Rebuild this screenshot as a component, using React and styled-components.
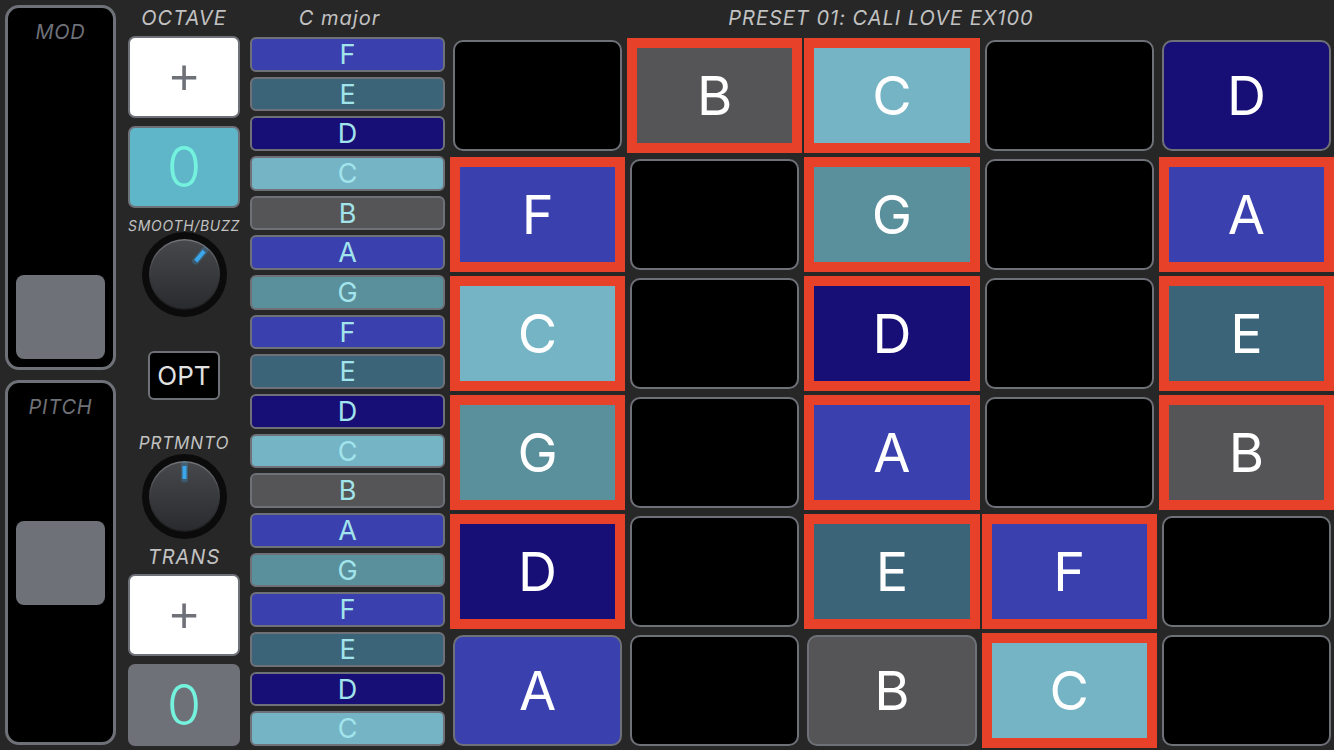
import React from 'react';
import styled, { createGlobalStyle } from 'styled-components';

const COLORS = {
  F: '#3a40ae',
  E: '#3c6479',
  D: '#170e76',
  C: '#74b4c4',
  B: '#555557',
  A: '#3a40ae',
  G: '#5a8f9c',
};

const SCALE = ['F', 'E', 'D', 'C', 'B', 'A', 'G', 'F', 'E', 'D', 'C', 'B', 'A', 'G', 'F', 'E', 'D', 'C'];

// null = empty pad, [note, highlighted]
const PADS = [
  [null, ['B', true], ['C', true], null, ['D', false]],
  [['F', true], null, ['G', true], null, ['A', true]],
  [['C', true], null, ['D', true], null, ['E', true]],
  [['G', true], null, ['A', true], null, ['B', true]],
  [['D', true], null, ['E', true], ['F', true], null],
  [['A', false], null, ['B', false], ['C', true], null],
];

const GlobalStyle = createGlobalStyle`
  html, body {
    margin: 0;
    padding: 0;
    background: #272727;
    overflow: hidden;
  }
  body {
    font-family: Inter, "Liberation Sans", sans-serif;
  }
`;

const Screen = styled.div`
  width: 1334px;
  height: 750px;
  display: flex;
  background: #272727;
`;

const StripColumn = styled.div`
  width: 111px;
  margin-left: 5px;
  padding: 5px 0;
  display: flex;
  flex-direction: column;
  gap: 10px;
`;

const Strip = styled.div`
  position: relative;
  flex: 1;
  background: #000;
  border: 3px solid #6f7178;
  border-radius: 14px;
`;

const StripLabel = styled.div`
  margin-top: 12px;
  text-align: center;
  font-style: italic;
  font-size: 20px;
  letter-spacing: 0.8px;
  color: #6f7178;
`;

const Thumb = styled.div`
  position: absolute;
  left: 8px;
  right: 8px;
  height: 84px;
  background: #6f7178;
  border-radius: 8px;
`;

const ControlColumn = styled.div`
  width: 114px;
  margin-left: 11px;
  display: flex;
  flex-direction: column;
  align-items: center;
`;

const Label = styled.div`
  flex-shrink: 0;
  height: ${p => p.$h || 36}px;
  margin-top: ${p => p.$mt || 0}px;
  display: flex;
  align-items: center;
  justify-content: center;
  font-style: italic;
  font-size: ${p => p.$size || 20}px;
  letter-spacing: ${p => p.$ls ?? 1}px;
  color: #c2c2c2;
  white-space: nowrap;
`;

const PlusButton = styled.div`
  flex-shrink: 0;
  box-sizing: border-box;
  width: 112px;
  height: 82px;
  margin-top: ${p => p.$mt || 0}px;
  background: #fff;
  border: 2px solid #6f7178;
  border-radius: 7px;
  display: flex;
  align-items: center;
  justify-content: center;
  font-family: "Liberation Sans", sans-serif;
  font-size: 50px;
  color: #6f7178;
  line-height: 1;
`;

const ValueBox = styled.div`
  flex-shrink: 0;
  box-sizing: border-box;
  width: 112px;
  height: 82px;
  margin-top: 8px;
  background: ${p => p.$bg};
  border: 2px solid ${p => p.$border};
  border-radius: 7px;
  display: flex;
  align-items: center;
  justify-content: center;
  font-size: 56px;
  font-weight: 300;
  color: #74f2dd;
`;

const KnobWrap = styled.div`
  flex-shrink: 0;
  width: 85px;
  height: 85px;
  margin-top: ${p => p.$mt || 0}px;
`;

const OptButton = styled.div`
  flex-shrink: 0;
  box-sizing: border-box;
  width: 72px;
  height: 49px;
  margin-top: ${p => p.$mt || 0}px;
  background: #000;
  border: 2px solid #6f7178;
  border-radius: 6px;
  display: flex;
  align-items: center;
  justify-content: center;
  font-size: 26px;
  color: #e2e2e2;
`;

const NoteColumn = styled.div`
  width: 195px;
  margin-left: 9px;
  display: flex;
  flex-direction: column;
  min-height: 0;
`;

const NoteList = styled.div`
  flex: 1 1 0;
  min-height: 0;
  margin: 1px 0 4px;
  display: flex;
  flex-direction: column;
  gap: 5px;
`;

const NoteRow = styled.div`
  flex: 1 1 0;
  min-height: 0;
  background: ${p => p.$bg};
  border: 2px solid #6f7178;
  border-radius: 6px;
  display: flex;
  align-items: center;
  justify-content: center;
  font-size: 27px;
  line-height: 1;
  color: #a2e4ec;
  overflow: hidden;
`;

const PadArea = styled.div`
  width: 884px;
  margin-left: 5px;
  display: flex;
  flex-direction: column;
`;

const PadGrid = styled.div`
  flex: 1;
  margin: 2px 0 2px;
  display: grid;
  grid-template-columns: repeat(5, 1fr);
  grid-template-rows: repeat(6, 1fr);
  column-gap: 2px;
  row-gap: 4px;
`;

const Pad = styled.div`
  box-sizing: border-box;
  display: flex;
  align-items: center;
  justify-content: center;
  font-size: 54px;
  color: #fff;
  background: ${p => p.$bg || '#000'};
  ${p =>
    p.$active
      ? `border: 10px solid #e8412a;`
      : `margin: 2px 3px; border: 2px solid #6f7178; border-radius: 10px;`}
`;

const Knob = ({ angle }) => (
  <svg width="85" height="85" viewBox="0 0 85 85">
    <defs>
      <linearGradient id={`kb${angle}`} x1="0" y1="0" x2="0" y2="1">
        <stop offset="0" stopColor="#47484c" />
        <stop offset="1" stopColor="#2a2b2e" />
      </linearGradient>
      <linearGradient id={`kr${angle}`} x1="0" y1="0" x2="0" y2="1">
        <stop offset="0" stopColor="#75767c" />
        <stop offset="0.5" stopColor="#3a3b3f" />
        <stop offset="1" stopColor="#1c1c1e" />
      </linearGradient>
    </defs>
    <circle cx="42.5" cy="42.5" r="42.5" fill="#0b0b0b" />
    <circle cx="42.5" cy="42.5" r="35.5" fill={`url(#kr${angle})`} />
    <circle cx="42.5" cy="42.5" r="34" fill={`url(#kb${angle})`} />
    <g transform={`rotate(${angle} 42.5 42.5)`}>
      <line x1="42.5" y1="11" x2="42.5" y2="25" stroke="#38a8f0" strokeWidth="7" strokeLinecap="round" opacity="0.25" />
      <line x1="42.5" y1="12" x2="42.5" y2="25" stroke="#3aa6ec" strokeWidth="4" />
    </g>
  </svg>
);

const App = () => {
  return (
    <>
      <GlobalStyle />
      <Screen>
        <StripColumn>
          <Strip>
            <StripLabel>MOD</StripLabel>
            <Thumb style={{ bottom: '8px' }} />
          </Strip>
          <Strip>
            <StripLabel>PITCH</StripLabel>
            <Thumb style={{ top: 'calc(50% - 42px)' }} />
          </Strip>
        </StripColumn>

        <ControlColumn>
          <Label>OCTAVE</Label>
          <PlusButton>+</PlusButton>
          <ValueBox $bg="#5eb6c8" $border="#6f7178">0</ValueBox>
          <Label $h={16} $mt={9} $size={14} $ls={0.7}>SMOOTH/BUZZ</Label>
          <KnobWrap $mt={-1}>
            <Knob angle={40} />
          </KnobWrap>
          <OptButton $mt={34}>OPT</OptButton>
          <Label $h={18} $mt={34} $size={17} $ls={0.9}>PRTMNTO</Label>
          <KnobWrap $mt={2}>
            <Knob angle={0} />
          </KnobWrap>
          <Label $h={20} $mt={8}>TRANS</Label>
          <PlusButton $mt={7}>+</PlusButton>
          <ValueBox $bg="#6f7178" $border="#6f7178">0</ValueBox>
        </ControlColumn>

        <NoteColumn>
          <Label style={{ paddingRight: '16px' }}>C major</Label>
          <NoteList>
            {SCALE.map((n, i) => (
              <NoteRow key={i} $bg={COLORS[n]}>{n}</NoteRow>
            ))}
          </NoteList>
        </NoteColumn>

        <PadArea>
          <Label style={{ paddingRight: '22px' }}>PRESET 01: CALI LOVE EX100</Label>
          <PadGrid>
            {PADS.flatMap((row, r) =>
              row.map((cell, c) =>
                cell ? (
                  <Pad key={`${r}-${c}`} $bg={COLORS[cell[0]]} $active={cell[1]}>
                    {cell[0]}
                  </Pad>
                ) : (
                  <Pad key={`${r}-${c}`} />
                )
              )
            )}
          </PadGrid>
        </PadArea>
      </Screen>
    </>
  );
};

export default App;
